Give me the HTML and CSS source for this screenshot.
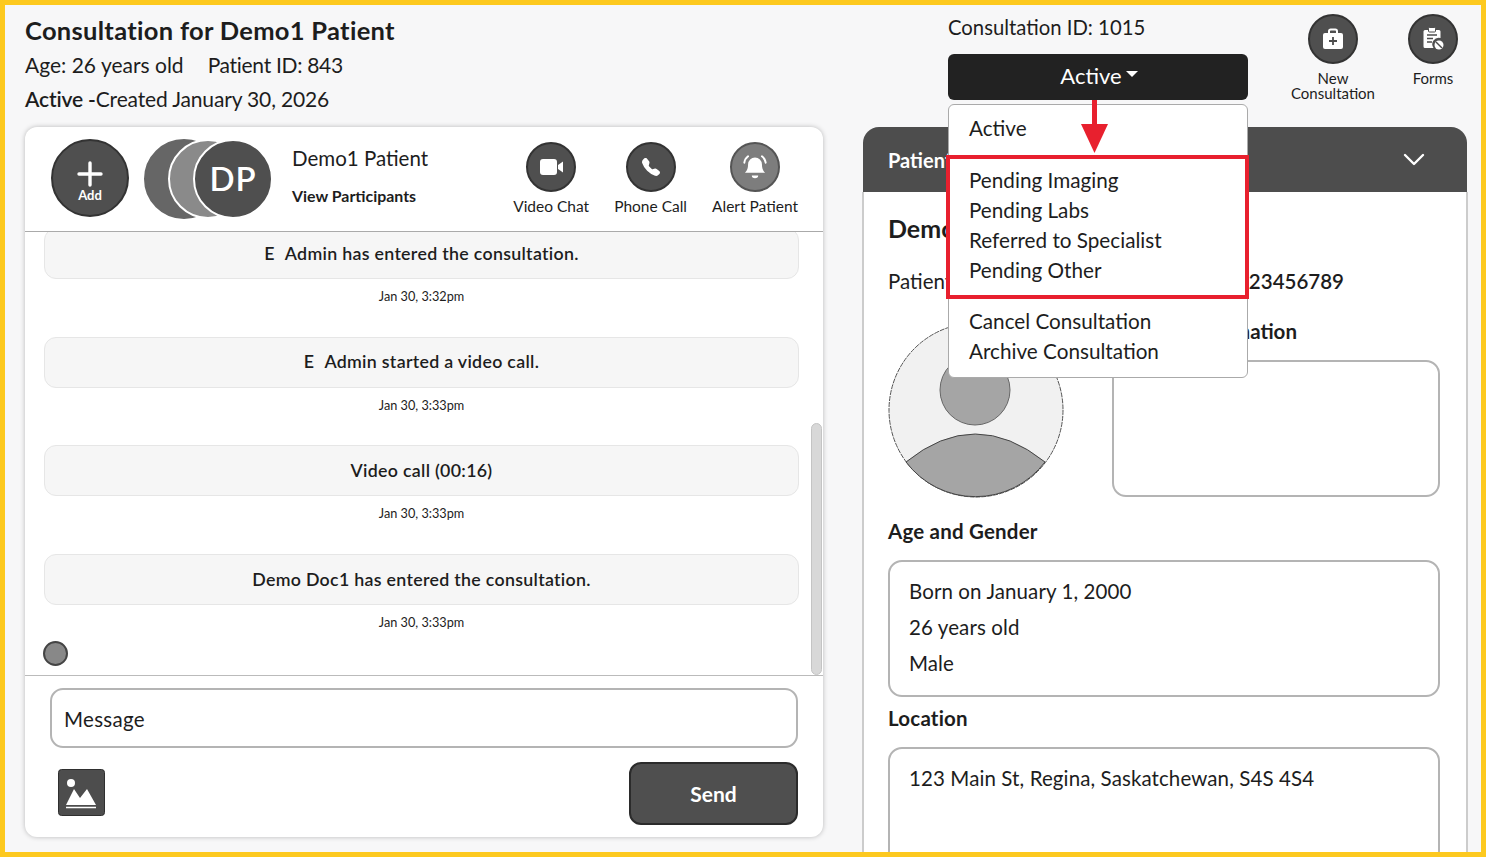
FILE: index.html
```html
<!DOCTYPE html>
<html lang="en">
<head>
    <meta charset="UTF-8">
    <title>Consultation 1015</title>
    <link rel="stylesheet" href="styles.css">
</head>
<body>
<div class="frame">
    <header class="top">
        <div class="summary">
            <h1>Consultation for Demo1 Patient</h1>
            <p><span class="age">Age: 26 years old</span><span class="pid">Patient ID: 843</span></p>
            <p class="created"><b class="semi">Active -</b>Created January 30, 2026</p>
        </div>
        <div class="status">
            <p class="consult-id">Consultation ID: 1015</p>
            <button class="status-btn">Active<i class="caret"></i></button>
            <div class="menu">
                <a class="first">Active</a>
                <div class="group">
                    <a>Pending Imaging</a>
                    <a>Pending Labs</a>
                    <a>Referred to Specialist</a>
                    <a>Pending Other</a>
                </div>
                <div class="group">
                    <a>Cancel Consultation</a>
                    <a>Archive Consultation</a>
                </div>
                <div class="red-box"></div>
            </div>
            <svg class="red-arrow" width="30" height="54" viewBox="0 0 30 54">
                <rect x="12" y="0" width="5" height="26" fill="#e8202e"/>
                <polygon points="1,24 28,24 14.500,53" fill="#e8202e"/>
            </svg>
        </div>
        <div class="top-actions">
            <div class="top-action">
                <span class="round">
                    <svg width="26" height="26" viewBox="0 0 26 26">
                        <path d="M9 7V5.200A1.700 1.700 0 0 1 10.700 3.500h4.600A1.700 1.700 0 0 1 17 5.200V7" fill="none" stroke="#fff" stroke-width="2"/>
                        <rect x="3" y="7" width="20" height="16" rx="2" fill="#fff"/>
                        <path d="M13 11v8M9 15h8" stroke="#4d4d4d" stroke-width="1.800"/>
                    </svg>
                </span>
                <span class="top-label">New<br>Consultation</span>
            </div>
            <div class="top-action">
                <span class="round">
                    <svg width="28" height="28" viewBox="0 0 28 28">
                        <path d="M6 5h14a1.500 1.500 0 0 1 1.500 1.500V13a6.500 6.500 0 0 0-7 10H6a1.500 1.500 0 0 1-1.500-1.500v-15A1.500 1.500 0 0 1 6 5z" fill="#fff"/>
                        <rect x="9.500" y="2.500" width="7" height="4.500" rx="1" fill="#fff" stroke="#4d4d4d"/>
                        <path d="M8 10h10M8 13.500h6M8 17h5" stroke="#4d4d4d" stroke-width="1.600"/>
                        <circle cx="20" cy="20" r="4.500" fill="#fff"/>
                        <path d="M17 17l6 6" stroke="#4d4d4d" stroke-width="1.400"/>
                    </svg>
                </span>
                <span class="top-label">Forms</span>
            </div>
        </div>
    </header>

    <div class="columns">
        <section class="chat">
            <div class="chat-head">
                <div class="add-btn">
                    <svg width="26" height="26" viewBox="0 0 26 26"><path d="M13 2v22M2 13h22" stroke="#fff" stroke-width="3.400" stroke-linecap="round"/></svg>
                    <span>Add</span>
                </div>
                <div class="stack">
                    <span class="bubble-av av1"></span>
                    <span class="bubble-av av2"></span>
                    <span class="bubble-av av3">DP</span>
                </div>
                <div class="who">
                    <p class="who-name">Demo1 Patient</p>
                    <p class="who-link">View Participants</p>
                </div>
                <div class="chat-actions">
                    <div class="chat-action">
                        <span class="round">
                            <svg width="28" height="28" viewBox="0 0 28 28">
                                <rect x="3" y="6" width="17" height="16" rx="3" fill="#fff"/>
                                <path d="M21 12l5-3.500v11L21 16z" fill="#fff"/>
                            </svg>
                        </span>
                        <span>Video Chat</span>
                    </div>
                    <div class="chat-action">
                        <span class="round">
                            <svg width="18" height="18" viewBox="0 0 16 16">
                                <path fill="#fff" d="M1.885.511a1.745 1.745 0 0 1 2.610.163L6.290 2.980c.329.423.445.974.315 1.494l-.547 2.190a.678.678 0 0 0 .178.643l2.457 2.457a.678.678 0 0 0 .644.178l2.189-.547a1.745 1.745 0 0 1 1.494.315l2.306 1.794c.829.645.905 1.870.163 2.611l-1.034 1.034c-.74.74-1.846 1.065-2.877.702a18.634 18.634 0 0 1-7.010-4.420 18.634 18.634 0 0 1-4.420-7.009c-.362-1.030-.037-2.137.703-2.877L1.885.511z"/>
                            </svg>
                        </span>
                        <span>Phone Call</span>
                    </div>
                    <div class="chat-action">
                        <span class="round round-light">
                            <svg width="32" height="32" viewBox="0 0 30 30">
                                <path d="M15 6a6.500 6.500 0 0 0-6.500 6.500c0 4.500-1.500 6.500-3 8h19c-1.500-1.500-3-3.500-3-8A6.500 6.500 0 0 0 15 6z" fill="#fff"/>
                                <path d="M12 23h6a3 2.500 0 0 1-6 0z" fill="#fff"/>
                                <path d="M5 11a9 9 0 0 1 3.500-6M25 11a9 9 0 0 0-3.500-6" fill="none" stroke="#fff" stroke-width="1.800" stroke-linecap="round"/>
                            </svg>
                        </span>
                        <span>Alert Patient</span>
                    </div>
                </div>
            </div>

            <div class="messages">
                <div class="msg first-msg">
                    <div class="msg-text"><span class="initial">E</span>Admin has entered the consultation.</div>
                    <div class="msg-time">Jan 30, 3:32pm</div>
                </div>
                <div class="msg">
                    <div class="msg-text"><span class="initial">E</span>Admin started a video call.</div>
                    <div class="msg-time">Jan 30, 3:33pm</div>
                </div>
                <div class="msg">
                    <div class="msg-text">Video call (00:16)</div>
                    <div class="msg-time">Jan 30, 3:33pm</div>
                </div>
                <div class="msg">
                    <div class="msg-text">Demo Doc1 has entered the consultation.</div>
                    <div class="msg-time">Jan 30, 3:33pm</div>
                </div>
                <div class="typing"></div>
                <div class="scroll-thumb"></div>
            </div>

            <div class="composer">
                <div class="message-box">Message</div>
                <div class="composer-row">
                    <span class="pic-btn">
                        <svg width="47" height="47" viewBox="0 0 47 47">
                            <rect x="0.500" y="0.500" width="46" height="46" rx="3" fill="#4d4d4d" stroke="#2f2f2f"/>
                            <circle cx="13" cy="14" r="4" fill="#fff"/>
                            <path d="M8 36l8-16 6 9 7-9 9 16z" fill="#fff"/>
                            <path d="M8 38.500h30" stroke="#fff" stroke-width="1.500"/>
                        </svg>
                    </span>
                    <button class="send">Send</button>
                </div>
            </div>
        </section>

        <section class="patient">
            <div class="patient-head">
                <span>Patient Information</span>
                <svg width="22" height="14" viewBox="0 0 22 14"><path d="M2 2l9 9 9-9" fill="none" stroke="#fff" stroke-width="2.400" stroke-linecap="round" stroke-linejoin="round"/></svg>
            </div>
            <div class="patient-body">
                <h2>Demo1 Patient</h2>
                <p class="health-row"><span>Patient Health Number:</span><b class="health-num">123456789</b></p>
                <div class="photo-row">
                    <svg class="avatar" width="176" height="176" viewBox="0 0 176 176">
                        <circle cx="88" cy="88" r="87" fill="#f1f1f1" stroke="#555" stroke-width="1" stroke-dasharray="5 1"/>
                        <circle cx="87" cy="68" r="35" fill="#a5a5a5" stroke="#666" stroke-width="1"/>
                        <path d="M18 140Q87 84 157 140A87 87 0 0 1 18 140z" fill="#a5a5a5" stroke="#444" stroke-width="1"/>
                    </svg>
                    <div class="extra">
                        <h3>Medical Information</h3>
                        <div class="field field-extra"></div>
                    </div>
                </div>
                <h3 class="age-title">Age and Gender</h3>
                <div class="field field-age">
                    <p>Born on January 1, 2000</p>
                    <p>26 years old</p>
                    <p>Male</p>
                </div>
                <h3 class="loc-title">Location</h3>
                <div class="field field-loc">
                    <p>123 Main St, Regina, Saskatchewan, S4S 4S4</p>
                </div>
            </div>
        </section>
    </div>
</div>
</body>
</html>
```

FILE: styles.css
```css
* {
    margin: 0;
    padding: 0;
    box-sizing: border-box;
}

body {
    font-family: Lato, "Noto Sans", Arial, sans-serif;
    background-color: #f7f7f8;
    color: #1d1d1d;
}

.frame {
    position: relative;
    width: 1486px;
    height: 857px;
    border: 5px solid #fdc91f;
    background-color: #f7f7f8;
    overflow: hidden;
}

/* top row */
.top {
    display: flex;
    height: 122px;
    padding-left: 20px;
}

.summary {
    width: 923px;
    padding-top: 8px;
    font-size: 21px;
    line-height: 34px;
}

.summary h1 {
    font-size: 25.5px;
    font-weight: 700;
    letter-spacing: 0.3px;
    margin-bottom: 1px;
}

.age {
    margin-right: 24px;
}

.pid {
    letter-spacing: -0.3px;
}

.created {
    letter-spacing: -0.15px;
}

.semi {
    font-weight: 600;
}

.status {
    position: relative;
    width: 300px;
    padding-top: 10px;
}

.consult-id {
    font-size: 20.3px;
    line-height: 24px;
}

.status-btn {
    display: flex;
    align-items: center;
    justify-content: center;
    width: 100%;
    height: 46px;
    margin-top: 15px;
    padding: 0 0 3px 2px;
    border: none;
    border-radius: 6px;
    background-color: #222;
    color: #fff;
    font-family: inherit;
    font-size: 22px;
}

.caret {
    width: 0;
    height: 0;
    margin: 0 0 4px 4px;
    border-left: 6px solid transparent;
    border-right: 6px solid transparent;
    border-top: 6px solid #fff;
}

.menu {
    position: absolute;
    top: 99px;
    left: 0;
    z-index: 5;
    width: 300px;
    height: 274px;
    padding: 8px 20px;
    background-color: #fff;
    border: 1px solid #aaa;
    border-radius: 6px;
    font-size: 20.7px;
}

.menu a {
    display: block;
    line-height: 30px;
}

.group {
    margin-top: 21px;
}

.first + .group {
    margin-top: 22px;
}

.red-box {
    position: absolute;
    top: 50px;
    left: -3px;
    width: 303px;
    height: 144px;
    border: 4px solid #e8202e;
}

.red-arrow {
    position: absolute;
    top: 95px;
    left: 132px;
    z-index: 6;
}

.top-actions {
    display: flex;
    gap: 10px;
    padding: 9px 0 0 40px;
}

.top-action {
    display: flex;
    flex-direction: column;
    align-items: center;
    width: 90px;
}

.top-label {
    margin-top: 7px;
    font-size: 15px;
    line-height: 15px;
    text-align: center;
    white-space: nowrap;
}

.round {
    display: flex;
    align-items: center;
    justify-content: center;
    width: 50px;
    height: 50px;
    border-radius: 50%;
    border: 2px solid #333;
    background-color: #4f4f4f;
}

.round-light {
    background-color: #7d7d7d;
    border-color: #555;
}

/* main columns */
.columns {
    display: flex;
    gap: 40px;
    padding-left: 20px;
}

.chat {
    width: 798px;
    height: 710px;
    background-color: #fff;
    border-radius: 12px;
    box-shadow: 0 0 5px rgba(0, 0, 0, 0.25);
    overflow: hidden;
}

.chat-head {
    display: flex;
    height: 105px;
    padding: 12px 25px 0 26px;
    border-bottom: 1px solid #aaa;
}

.add-btn {
    display: flex;
    flex-direction: column;
    align-items: center;
    width: 78px;
    height: 78px;
    padding-top: 20px;
    border-radius: 50%;
    border: 2px solid #333;
    background-color: #4f4f4f;
    color: #fff;
    font-size: 13px;
    font-weight: 700;
}

.stack {
    display: flex;
    width: 128px;
    margin-left: 15px;
}

.bubble-av {
    flex-shrink: 0;
    width: 80px;
    height: 80px;
    border-radius: 50%;
    border: 2px solid #fff;
    margin-left: -55px;
}

.av1 {
    margin-left: 0;
    background-color: #666;
    border-color: #666;
}

.av2 {
    margin-left: -56px;
    background-color: #8a8a8a;
}

.av3 {
    display: flex;
    align-items: center;
    justify-content: center;
    padding-bottom: 2px;
    background-color: #4f4f4f;
    color: #fff;
    font-size: 33px;
    font-weight: 600;
    letter-spacing: 1px;
}

.who {
    margin-left: 20px;
}

.who-name {
    margin-top: 5px;
    font-size: 20.5px;
    line-height: 28px;
}

.who-link {
    margin-top: 14px;
    font-size: 15.9px;
    line-height: 20px;
    font-weight: 700;
}

.chat-actions {
    display: flex;
    gap: 25px;
    margin-left: auto;
    padding-top: 3px;
}

.chat-action {
    display: flex;
    flex-direction: column;
    align-items: center;
    font-size: 15.5px;
    white-space: nowrap;
}

.chat-action span:last-child:not(.round) {
    margin-top: 5px;
    line-height: 18px;
}

.messages {
    position: relative;
    height: 444px;
    padding: 0 24px 0 19px;
    border-bottom: 1px solid #bbb;
    overflow: hidden;
}

.msg {
    margin-top: 32.7px;
}

.first-msg {
    margin-top: -4px;
}

.msg-text {
    display: flex;
    align-items: center;
    justify-content: center;
    height: 51px;
    padding-bottom: 2px;
    background-color: #f6f6f6;
    border: 1px solid #e6e6e6;
    border-radius: 12px;
    font-size: 17.8px;
    font-weight: 600;
    letter-spacing: 0.3px;
}

.initial {
    margin-right: 10px;
}

.msg-time {
    margin-top: 9px;
    font-size: 12.7px;
    line-height: 16px;
    text-align: center;
}

.typing {
    width: 25px;
    height: 25px;
    margin: 11px 0 0 -1px;
    border-radius: 50%;
    border: 2px solid #444;
    background-color: #888;
}

.scroll-thumb {
    position: absolute;
    top: 191px;
    right: 1px;
    width: 11px;
    height: 252px;
    border-radius: 6px;
    background-color: #d8d8d8;
    border: 1px solid #c4c4c4;
}

.composer {
    padding: 12px 25px 0;
}

.message-box {
    display: flex;
    align-items: center;
    height: 60px;
    padding: 2px 0 0 12px;
    border: 2px solid #b4b4b4;
    border-radius: 13px;
    font-size: 20.5px;
    letter-spacing: 0.3px;
}

.composer-row {
    display: flex;
    align-items: center;
    justify-content: space-between;
    margin-top: 14px;
    padding-left: 8px;
}

.pic-btn {
    display: block;
    height: 47px;
    margin-bottom: 2px;
}

.send {
    width: 169px;
    height: 63px;
    border: 2px solid #2b2b2b;
    border-radius: 12px;
    background-color: #4f4f4f;
    color: #fff;
    font-family: inherit;
    font-size: 21px;
    font-weight: 700;
}

/* patient column */
.patient {
    width: 604px;
}

.patient-head {
    display: flex;
    align-items: center;
    justify-content: space-between;
    height: 65px;
    padding: 0 42px 0 25px;
    border-radius: 16px 16px 0 0;
    background-color: #4d4d4d;
    color: #fff;
    font-size: 20px;
    font-weight: 700;
}

.patient-body {
    height: 700px;
    padding: 20px 26px 0 24px;
    background-color: #fff;
    border-left: 2px solid #ccc;
    border-right: 2px solid #ccc;
    margin: 0 -1px;
}

.patient-body h2 {
    font-size: 25px;
    line-height: 32px;
    font-weight: 700;
}

.health-row {
    display: flex;
    margin-top: 23px;
    font-size: 20.5px;
    line-height: 28px;
}

.health-num {
    margin-left: auto;
    margin-right: 96px;
    font-weight: 600;
}

.photo-row {
    display: flex;
    gap: 48px;
    margin-top: 27px;
}

.avatar {
    flex-shrink: 0;
}

.extra {
    flex: 1;
    margin-top: -5px;
}

.extra h3 {
    line-height: 28px;
    letter-spacing: 0;
}

.patient-body h3 {
    font-size: 20.5px;
    font-weight: 700;
    letter-spacing: 0.2px;
}

.patient-body .extra h3 {
    letter-spacing: 0;
}

.field {
    border: 2px solid #b4b4b4;
    border-radius: 14px;
    background-color: #fff;
    font-size: 20.5px;
    letter-spacing: 0.1px;
}

.field-extra {
    height: 137px;
    margin-top: 15px;
}

.age-title {
    margin-top: 19px;
    line-height: 28px;
}

.field-age {
    height: 137px;
    margin-top: 15px;
    padding: 11px 19px 0;
}

.field-age p {
    line-height: 36px;
}

.loc-title {
    margin-top: 7px;
    line-height: 28px;
}

.field-loc {
    height: 137px;
    margin-top: 15px;
    padding: 12px 19px 0;
}

.field-loc p {
    line-height: 34px;
}
```
